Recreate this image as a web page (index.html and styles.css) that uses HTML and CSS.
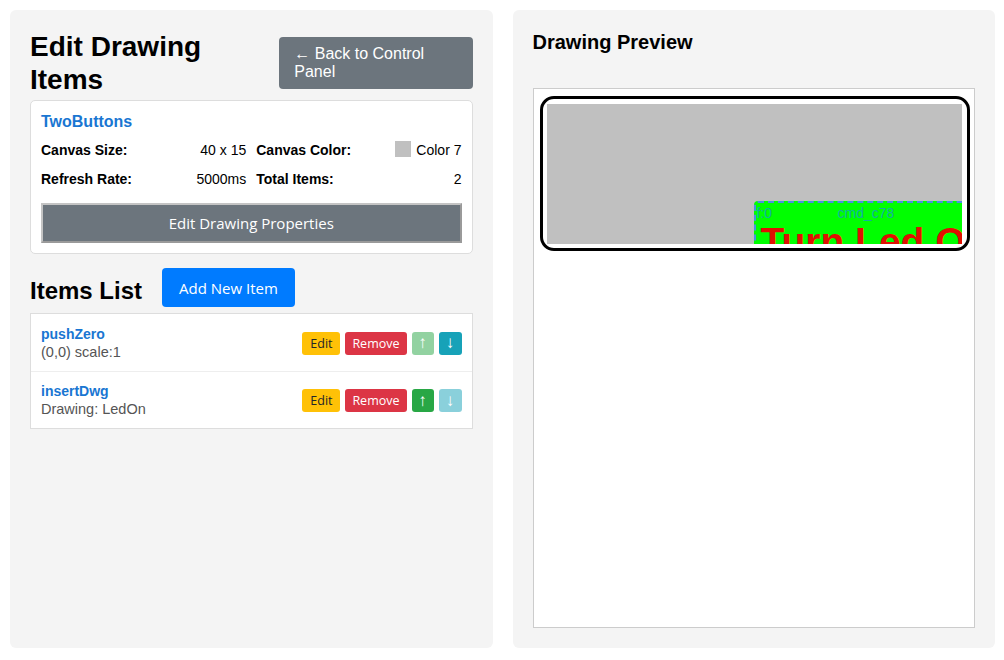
FILE: index.html
```html
<!DOCTYPE html>
<html lang="en">
<head>
    <meta charset="UTF-8">
    <meta name="viewport" content="width=device-width, initial-scale=1.0">
    <link rel="stylesheet" href="styles.css">
    <title>Edit Drawing Items</title>
</head>
<body>
    <div class="editor">
        <!-- Left side: drawing info and items -->
        <div class="panel">
            <div class="panel-header">
                <h1>Edit Drawing Items</h1>
                <button class="back-btn">&larr; Back to Control Panel</button>
            </div>

            <div class="info-card">
                <h3 class="dwg-name">TwoButtons</h3>
                <div class="info-grid">
                    <div class="info-row"><b>Canvas Size:</b><span>40 x 15</span></div>
                    <div class="info-row"><b>Canvas Color:</b><span class="color-val"><i class="swatch"></i>Color 7</span></div>
                    <div class="info-row"><b>Refresh Rate:</b><span>5000ms</span></div>
                    <div class="info-row"><b>Total Items:</b><span>2</span></div>
                </div>
                <button class="props-btn">Edit Drawing Properties</button>
            </div>

            <div class="list-header">
                <h2>Items List</h2>
                <button class="add-btn">Add New Item</button>
            </div>

            <div class="items">
                <div class="item-row">
                    <div class="item-info">
                        <div class="item-name">pushZero</div>
                        <div class="item-desc">(0,0) scale:1</div>
                    </div>
                    <div class="item-actions">
                        <button class="sm-btn edit">Edit</button>
                        <button class="sm-btn remove">Remove</button>
                        <button class="sm-btn up" disabled>&uarr;</button>
                        <button class="sm-btn down">&darr;</button>
                    </div>
                </div>
                <div class="item-row">
                    <div class="item-info">
                        <div class="item-name">insertDwg</div>
                        <div class="item-desc">Drawing: LedOn</div>
                    </div>
                    <div class="item-actions">
                        <button class="sm-btn edit">Edit</button>
                        <button class="sm-btn remove">Remove</button>
                        <button class="sm-btn up">&uarr;</button>
                        <button class="sm-btn down" disabled>&darr;</button>
                    </div>
                </div>
            </div>
        </div>

        <!-- Right side: preview -->
        <div class="panel">
            <h2 class="preview-title">Drawing Preview</h2>
            <div class="preview-box">
                <div class="dwg-frame">
                    <div class="dwg-canvas">
                        <div class="dwg-item">
                            <span class="tag-f">f:0</span>
                            <span class="tag-cmd">cmd_c78</span>
                            <div class="btn-label">Turn Led On</div>
                        </div>
                    </div>
                </div>
            </div>
        </div>
    </div>
</body>
</html>
```

FILE: styles.css
```css
* {
    box-sizing: border-box;
}

body {
    font-family: "Liberation Sans", Arial, sans-serif;
    margin: 0;
    padding: 10px 9px 12px 10px;
    height: 100vh;
    background: #fff;
    color: #000;
}

.editor {
    display: grid;
    grid-template-columns: 1fr 1fr;
    gap: 20px;
    height: 100%;
}

.panel {
    background-color: #f4f4f4;
    border-radius: 6px;
    padding: 20px;
    display: flex;
    flex-direction: column;
}

.panel-header {
    display: flex;
    justify-content: space-between;
    align-items: center;
    margin-bottom: 4px;
}

h1 {
    font-size: 28px;
    line-height: 33px;
    margin: 0;
}

.back-btn {
    font-family: "Liberation Sans", Arial, sans-serif;
    font-size: 16px;
    line-height: 18px;
    text-align: left;
    width: 195px;
    padding: 8px 15px;
    margin-top: -1px;
    background-color: #6c757d;
    color: #fff;
    border: none;
    border-radius: 4px;
}

.info-card {
    background: #fff;
    border: 1px solid #ddd;
    border-radius: 5px;
    padding: 10px;
}

.dwg-name {
    font-size: 16px;
    color: #1976d2;
    margin: 2px 0 10px;
}

.info-grid {
    display: grid;
    grid-template-columns: 1fr 1fr;
    column-gap: 10px;
    row-gap: 11px;
    font-size: 14px;
    line-height: 18px;
}

.info-row {
    display: flex;
    justify-content: space-between;
    align-items: center;
}

.color-val {
    display: flex;
    align-items: center;
    gap: 5px;
}

.swatch {
    display: inline-block;
    width: 16px;
    height: 16px;
    background: #c0c0c0;
    margin-top: -3px;
}

.props-btn {
    display: block;
    width: 100%;
    margin-top: 15px;
    height: 40px;
    font-family: "Open Sans", sans-serif;
    font-size: 15px;
    background-color: #6c757d;
    color: #fff;
    border: 2px solid #c4c4c4;
    border-right-color: #9a9a9a;
    border-bottom-color: #9a9a9a;
}

.list-header {
    display: flex;
    align-items: center;
    gap: 20px;
    margin-top: 14px;
    margin-bottom: 6px;
}

.list-header h2 {
    font-size: 24px;
    margin: 0;
    padding-top: 6px;
}

.add-btn {
    font-family: "Open Sans", sans-serif;
    font-size: 15px;
    height: 39px;
    padding: 0 17px;
    background-color: #007bff;
    color: #fff;
    border: none;
    border-radius: 4px;
}

.items {
    background: #fff;
    border: 1px solid #ddd;
}

.item-row {
    display: flex;
    justify-content: space-between;
    align-items: center;
    padding: 10px;
    height: 57px;
}

.item-row + .item-row {
    border-top: 1px solid #eee;
}

.item-name {
    font-size: 14px;
    font-weight: bold;
    color: #1976d2;
}

.item-desc {
    font-size: 14.5px;
    color: #555;
    margin-top: 2px;
}

.item-actions {
    display: flex;
    gap: 5px;
    margin-top: 1px;
}

.sm-btn {
    font-family: "Open Sans", sans-serif;
    font-size: 12.5px;
    height: 23px;
    padding: 0 7px;
    border: none;
    border-radius: 3px;
    color: #fff;
}

.sm-btn.edit {
    background: #ffc107;
    color: #212529;
    width: 38px;
    padding: 0;
}

.sm-btn.remove {
    background: #dc3545;
}

.sm-btn.up,
.sm-btn.down {
    font-family: "Liberation Sans", Arial, sans-serif;
    font-size: 17px;
    width: 23px;
    padding: 0;
}

.sm-btn.up {
    background: #28a745;
    width: 22px;
}

.sm-btn.down {
    background: #17a2b8;
}

.sm-btn:disabled {
    opacity: 0.5;
}

.preview-title {
    font-size: 20px;
    margin: 0 0 34px;
    line-height: 24px;
}

.preview-box {
    flex: 1;
    background: #fff;
    border: 1px solid #ccc;
    padding: 7px 4px 6px 6px;
}

.dwg-frame {
    border: 3px solid #000;
    border-radius: 14px;
    padding: 5px 5px 4px 4px;
    height: 155px;
}

.dwg-canvas {
    position: relative;
    height: 100%;
    background: #c0c0c0;
    overflow: hidden;
}

/* item placed on the drawing canvas */
.dwg-item {
    position: absolute;
    left: 207px;
    top: 97px;
    width: 240px;
    height: 70px;
    background: #00ff00;
    border: 2px dashed #4a90e2;
    border-radius: 4px;
}

.tag-f,
.tag-cmd {
    position: absolute;
    top: 2px;
    font-size: 14px;
    color: #10b0a0;
}

.tag-f {
    left: 1px;
}

.tag-cmd {
    left: 82px;
}

.btn-label {
    position: absolute;
    left: 5px;
    top: 17px;
    font-size: 39px;
    font-weight: bold;
    color: #e01000;
    white-space: nowrap;
}
```
